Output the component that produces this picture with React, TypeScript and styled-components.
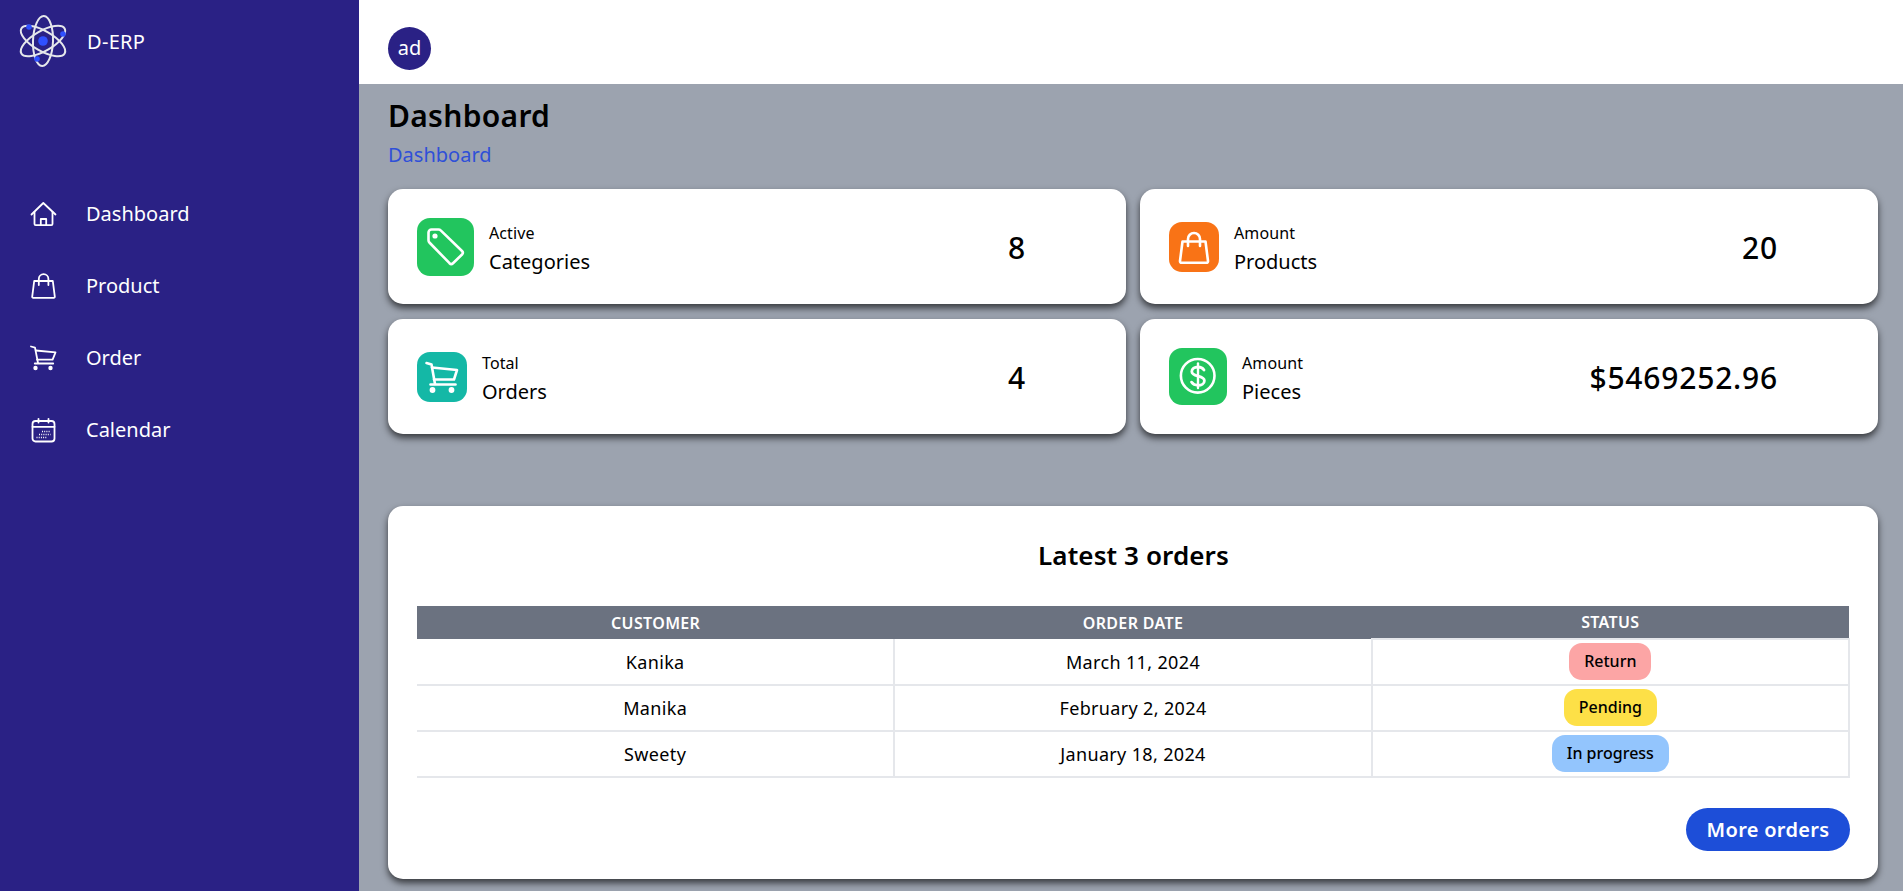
import React, { FC, ReactNode } from "react";
import styled, { createGlobalStyle } from "styled-components";

const GlobalStyle = createGlobalStyle`
  html, body {
    margin: 0;
    padding: 0;
    overflow: hidden;
  }
  body {
    font-family: "Noto Sans", "Open Sans", sans-serif;
    color: #000;
  }
`;

const AtomLogo: FC = () => (
  <svg width="50" height="54" viewBox="0 0 50 54" fill="none">
    <g transform="translate(25 27)" stroke="#e5e7eb" strokeWidth="2">
      <ellipse rx="25" ry="10" transform="rotate(92)" />
      <ellipse rx="25" ry="10" transform="rotate(30)" />
      <ellipse rx="25" ry="10" transform="rotate(-30)" />
    </g>
    <circle cx="25" cy="27" r="4.8" fill="#2f50ff" />
    <circle cx="11" cy="13" r="2.8" fill="#2f50ff" />
    <circle cx="45" cy="20" r="2.8" fill="#2f50ff" />
    <circle cx="19" cy="45" r="2.8" fill="#2f50ff" />
  </svg>
);

const HomeIcon: FC = () => (
  <svg width="28" height="28" viewBox="0 0 28 28" fill="none" stroke="#fff" strokeWidth="1.8" strokeLinejoin="round" strokeLinecap="round">
    <path d="M2.5 14.5 14.3 3 26.5 14.5" />
    <path d="M5.5 12v12a1.2 1.2 0 0 0 1.2 1.2h15.6a1.2 1.2 0 0 0 1.2-1.2V12" />
    <path d="M11.8 25v-6h5.4v6" />
  </svg>
);

const BagIcon: FC = () => (
  <svg width="28" height="28" viewBox="0 0 28 28" fill="none" stroke="#fff" strokeWidth="1.8" strokeLinejoin="round" strokeLinecap="round">
    <path d="M5.2 9H23.8L25.8 24.6a1 1 0 0 1-1 1.2H4.2a1 1 0 0 1-1-1.2Z" />
    <path d="M9.8 13V7a4.8 4.8 0 0 1 9.6 0v6" />
  </svg>
);

const CartIcon: FC = () => (
  <svg width="28" height="28" viewBox="0 0 28 28" fill="none" stroke="#fff" strokeWidth="1.8" strokeLinejoin="round" strokeLinecap="round">
    <path d="M2 2.5 6 3.6 9 19" />
    <path d="M6.8 6.5 26.5 8.4 23.6 15.6H8" />
    <path d="M5.8 19.5H24.2" />
    <circle cx="6.5" cy="24" r="1.3" fill="#fff" />
    <circle cx="21.5" cy="24" r="1.3" fill="#fff" />
  </svg>
);

const CalendarIcon: FC = () => (
  <svg width="28" height="28" viewBox="0 0 28 28" fill="none" stroke="#fff" strokeWidth="1.8" strokeLinecap="round">
    <rect x="3.5" y="5" width="22" height="20.5" rx="3" />
    <path d="M3.5 10.8H25.5M9.5 2.8V6.5M19.5 2.8V6.5" />
    <path d="M13 15.5H21.5M10 18.5H21.5M7.5 21.5H18" strokeWidth="1.4" strokeDasharray="1 1.2" strokeLinecap="butt" />
  </svg>
);

const TagGlyph: FC = () => (
  <svg width="57" height="58" viewBox="0 0 57 58" fill="none" stroke="#fff" strokeWidth="2.6" strokeLinejoin="round">
    <path d="M14.5 11.5H21.5a3 3 0 0 1 2.2.9L45 33a2.5 2.5 0 0 1 0 3.5L36 45.2a2.5 2.5 0 0 1-3.5 0L12.4 24.5a3 3 0 0 1-.9-2.2V14.5a3 3 0 0 1 3-3Z" />
    <circle cx="18" cy="18" r="1.3" fill="#fff" />
  </svg>
);

const BagGlyph: FC = () => (
  <svg width="50" height="50" viewBox="0 0 50 50" fill="none" stroke="#fff" strokeWidth="2.6" strokeLinejoin="round" strokeLinecap="round">
    <path d="M13.5 19.5H36.5L39 39a1.6 1.6 0 0 1-1.6 1.8H12.6A1.6 1.6 0 0 1 11 39Z" />
    <path d="M19 24V17a6 6 0 0 1 12 0v7" />
  </svg>
);

const CartGlyph: FC = () => (
  <svg width="50" height="50" viewBox="0 0 50 50" fill="none" stroke="#fff" strokeWidth="2.6" strokeLinejoin="round" strokeLinecap="round">
    <path d="M9.5 11 14.5 12.5 18 32" />
    <path d="M15 15.5 40 18 37 27.5H17" />
    <path d="M13.5 32.5H38.5" />
    <circle cx="15.5" cy="38" r="1.6" fill="#fff" />
    <circle cx="34.5" cy="38" r="1.6" fill="#fff" />
  </svg>
);

const DollarGlyph: FC = () => (
  <svg width="58" height="57" viewBox="0 0 58 57" fill="none" stroke="#fff" strokeLinecap="round">
    <circle cx="28.7" cy="27.8" r="16.8" strokeWidth="2.6" />
    <path d="M35 22c-1.4-2.2-3.6-3-6-3-3.6 0-6.2 1.8-6.2 4.5 0 6 12.6 3.2 12.6 9.2 0 2.8-2.8 4.6-6.3 4.6-2.6 0-5.2-1-6.6-3.2" strokeWidth="2.8" />
    <path d="M29 15.5V40" strokeWidth="2.4" />
  </svg>
);

const navItems: { label: string; icon: ReactNode }[] = [
  { label: "Dashboard", icon: <HomeIcon /> },
  { label: "Product", icon: <BagIcon /> },
  { label: "Order", icon: <CartIcon /> },
  { label: "Calendar", icon: <CalendarIcon /> },
];

const stats = [
  { label: "Active", title: "Categories", value: "8", color: "#22c55e", w: 57, h: 58, glyph: <TagGlyph /> },
  { label: "Amount", title: "Products", value: "20", color: "#f97316", w: 50, h: 50, glyph: <BagGlyph /> },
  { label: "Total", title: "Orders", value: "4", color: "#14b8a6", w: 50, h: 50, glyph: <CartGlyph /> },
  { label: "Amount", title: "Pieces", value: "$5469252.96", color: "#22c55e", w: 58, h: 57, glyph: <DollarGlyph /> },
];

const orders = [
  { customer: "Kanika", date: "March 11, 2024", status: "Return", color: "#fca5a5" },
  { customer: "Manika", date: "February 2, 2024", status: "Pending", color: "#fde047" },
  { customer: "Sweety", date: "January 18, 2024", status: "In progress", color: "#93c5fd" },
];

export default function App() {
  return (
    <Page>
      <GlobalStyle />
      <Sidebar>
        <Brand>
          <AtomLogo />
          <BrandName>D-ERP</BrandName>
        </Brand>
        <Nav>
          {navItems.map((item) => (
            <NavItem key={item.label}>
              <NavIcon>{item.icon}</NavIcon>
              <NavLabel>{item.label}</NavLabel>
            </NavItem>
          ))}
        </Nav>
      </Sidebar>
      <Main>
        <TopBar>
          <Avatar>ad</Avatar>
        </TopBar>
        <Content>
          <PageTitle>Dashboard</PageTitle>
          <Crumb>Dashboard</Crumb>
          <StatGrid>
            {stats.map((s) => (
              <StatCard key={s.title}>
                <StatLeft>
                  <IconBox $color={s.color} $w={s.w} $h={s.h}>
                    {s.glyph}
                  </IconBox>
                  <StatText>
                    <StatLabel>{s.label}</StatLabel>
                    <StatTitle>{s.title}</StatTitle>
                  </StatText>
                </StatLeft>
                <StatValue>{s.value}</StatValue>
              </StatCard>
            ))}
          </StatGrid>
          <OrdersCard>
            <OrdersTitle>Latest 3 orders</OrdersTitle>
            <Table>
              <thead>
                <tr>
                  <th>Customer</th>
                  <th>Order Date</th>
                  <th>Status</th>
                </tr>
              </thead>
              <tbody>
                {orders.map((o) => (
                  <tr key={o.customer}>
                    <td>{o.customer}</td>
                    <td>{o.date}</td>
                    <td>
                      <Pill $color={o.color}>{o.status}</Pill>
                    </td>
                  </tr>
                ))}
              </tbody>
            </Table>
            <Actions>
              <MoreButton>More orders</MoreButton>
            </Actions>
          </OrdersCard>
        </Content>
      </Main>
    </Page>
  );
}

const Page = styled.div`
  display: flex;
  height: 891px;
  overflow: hidden;
`;

const Sidebar = styled.aside`
  width: 359px;
  flex-shrink: 0;
  background: #2a2185;
  color: #fff;
`;

const Brand = styled.div`
  display: flex;
  align-items: center;
  gap: 19px;
  height: 54px;
  padding: 14px 0 0 18px;
`;

const BrandName = styled.span`
  font-size: 20px;
  letter-spacing: 0.3px;
  padding-top: 1px;
`;

const Nav = styled.nav`
  display: flex;
  flex-direction: column;
  margin-top: 110px;
`;

const NavItem = styled.div`
  display: flex;
  align-items: center;
  gap: 29px;
  height: 72px;
  padding-left: 29px;
  font-size: 20px;
`;

const NavLabel = styled.span`
  padding-bottom: 2px;
`;

const NavIcon = styled.span`
  display: flex;
  width: 28px;
  height: 28px;
`;

const Main = styled.main`
  flex: 1;
  min-width: 0;
  background: #9ca3af;
`;

const TopBar = styled.header`
  display: flex;
  align-items: center;
  height: 84px;
  padding: 13px 0 0 29px;
  box-sizing: border-box;
  background: #fff;
`;

const Avatar = styled.div`
  display: flex;
  align-items: center;
  justify-content: center;
  width: 43px;
  height: 43px;
  box-sizing: border-box;
  padding-bottom: 2px;
  border-radius: 50%;
  background: #2a2185;
  color: #fff;
  font-size: 20px;
`;

const Content = styled.div`
  padding: 12px 25px 0 29px;
`;

const PageTitle = styled.h1`
  margin: 0;
  font-size: 30px;
  line-height: 40px;
  font-weight: 600;
  letter-spacing: 0.3px;
`;

const Crumb = styled.div`
  margin-top: 5px;
  font-size: 20px;
  line-height: 27px;
  color: #2f50d8;
`;

const StatGrid = styled.div`
  display: grid;
  grid-template-columns: 738px 738px;
  column-gap: 14px;
  row-gap: 15px;
  margin-top: 21px;
`;

const StatCard = styled.div`
  display: flex;
  align-items: center;
  justify-content: space-between;
  height: 115px;
  padding: 0 100px 0 29px;
  border-radius: 15px;
  background: #fff;
  box-shadow: 0 4px 7px rgba(0, 0, 0, 0.65);
`;

const StatLeft = styled.div`
  display: flex;
  align-items: center;
  gap: 15px;
`;

const StatText = styled.div`
  padding-top: 6px;
`;

const IconBox = styled.div<{ $color: string; $w: number; $h: number }>`
  display: flex;
  width: ${({ $w }) => $w}px;
  height: ${({ $h }) => $h}px;
  border-radius: 13px;
  background: ${({ $color }) => $color};
`;

const StatLabel = styled.div`
  font-size: 16px;
  line-height: 24px;
  letter-spacing: 0.1px;
`;

const StatTitle = styled.div`
  font-size: 20px;
  line-height: 34px;
`;

const StatValue = styled.div`
  padding-top: 1px;
  font-size: 30px;
  font-weight: 500;
  letter-spacing: 0.8px;
`;

const OrdersCard = styled.section`
  height: 373px;
  box-sizing: border-box;
  margin-top: 72px;
  padding: 0 28px 0 29px;
  border-radius: 15px;
  background: #fff;
  box-shadow: 0 4px 7px rgba(0, 0, 0, 0.65);
`;

const OrdersTitle = styled.h2`
  margin: 0;
  padding-top: 28px;
  height: 100px;
  box-sizing: border-box;
  text-align: center;
  font-size: 26px;
  line-height: 42px;
  font-weight: 600;
  letter-spacing: 0.1px;
`;

const Table = styled.table`
  width: 100%;
  table-layout: fixed;
  border-collapse: collapse;
  font-size: 18px;
  letter-spacing: 0.35px;

  th {
    height: 32px;
    padding: 0;
    background: #6b7280;
    color: #fff;
    font-size: 16px;
    font-weight: 600;
    letter-spacing: 0.35px;
    text-transform: uppercase;
  }

  td {
    height: 44px;
    padding: 0;
    text-align: center;
    border-bottom: 2px solid #e5e7eb;
    border-right: 2px solid #e5e7eb;
  }

  td:last-child {
    border: 2px solid #e5e7eb;
  }
`;

const Pill = styled.span<{ $color: string }>`
  display: inline-block;
  height: 37px;
  line-height: 37px;
  margin-bottom: 2px;
  padding: 0 15px;
  border-radius: 13px;
  background: ${({ $color }) => $color};
  font-size: 16px;
  font-weight: 500;
  letter-spacing: 0;
  vertical-align: middle;
`;

const Actions = styled.div`
  display: flex;
  justify-content: flex-end;
  margin-top: 30px;
`;

const MoreButton = styled.button`
  width: 164px;
  height: 43px;
  padding: 0;
  border: 0;
  border-radius: 22px;
  background: #1d4ed8;
  color: #fff;
  font-family: inherit;
  font-size: 20px;
  font-weight: 600;
  letter-spacing: 0.3px;
`;
